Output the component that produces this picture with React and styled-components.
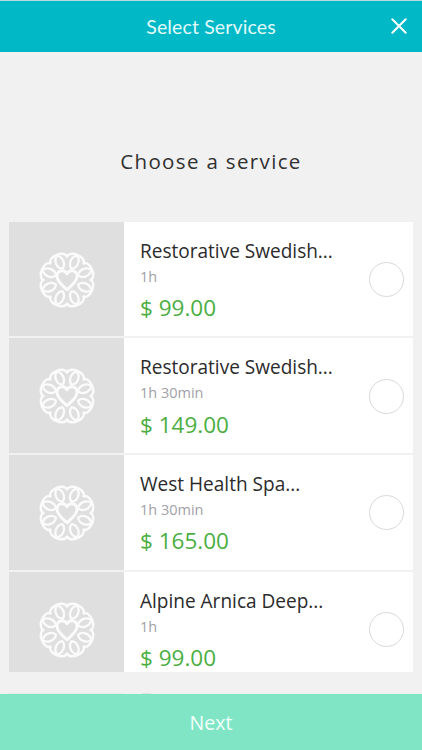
import React from 'react';
import styled, { createGlobalStyle } from 'styled-components';

const GlobalStyle = createGlobalStyle`
  * { box-sizing: border-box; }
  html, body { margin: 0; padding: 0; overflow: hidden; }
`;

const Screen = styled.div`
  width: 422px;
  height: 750px;
  display: flex;
  flex-direction: column;
  background: #f1f1f1;
  font-family: 'Open Sans', 'Noto Sans', sans-serif;
  overflow: hidden;
`;

const Header = styled.header`
  height: 52px;
  flex: none;
  display: grid;
  grid-template-columns: 44px 1fr 44px;
  align-items: center;
  background: #00b8c6;
  border-top: 1px solid #b5d9dd;
  color: #e2fafc;
`;

const Title = styled.h1`
  grid-column: 2;
  margin: 0;
  text-align: center;
  font: 400 19.5px/26px Lato, sans-serif;
  letter-spacing: 0.13px;
`;

const CloseButton = styled.button`
  border: 0;
  padding: 0 2px 2px 0;
  background: none;
  height: 44px;
  display: flex;
  align-items: center;
  justify-content: center;
`;

const Heading = styled.h2`
  margin: 0;
  height: 169.5px;
  flex: none;
  padding-top: 94px;
  text-align: center;
  font-size: 20.5px;
  line-height: 30px;
  font-weight: 400;
  letter-spacing: 1.35px;
  color: #303030;
`;

const ServiceList = styled.ul`
  list-style: none;
  margin: 0 9px;
  padding: 0;
  height: 450.5px;
  flex: none;
  display: flex;
  flex-direction: column;
  gap: 2px;
  overflow: hidden;
`;

const Row = styled.li`
  flex: none;
  height: 114.7px;
  display: flex;
  background: #fff;
`;

const Thumb = styled.div`
  width: 115px;
  flex: none;
  display: flex;
  align-items: center;
  justify-content: center;
  background: #dfdfdf;
  padding: 1.5px 0 0 1px;
`;

const Details = styled.div`
  flex: 1;
  min-width: 0;
  padding: 15px 0 0 16px;
  white-space: nowrap;
`;

const Name = styled.div`
  font-size: 19.05px;
  line-height: 28px;
  color: #2b2b2b;
`;

const Duration = styled.div`
  font-size: 14.5px;
  line-height: 22px;
  margin-top: 1.3px;
  color: #9fa1a6;
`;

const Price = styled.div`
  font-size: 22.5px;
  line-height: 26px;
  margin-top: 7.2px;
  color: #4bae41;
`;

const Radio = styled.span`
  width: 35px;
  height: 35px;
  flex: none;
  align-self: center;
  margin: 1px 9px 0 0;
  border: 1px solid #d9d9d9;
  border-radius: 50%;
`;

const Gap = styled.div`
  flex: 1;
  display: flex;
  align-items: flex-end;
  padding-left: 9px;
`;

const NextRowEdge = styled.div`
  width: 115px;
  height: 1px;
  background: #e6eae8;
`;

const NextRowText = styled.div`
  width: 9px;
  height: 1px;
  margin-left: 18px;
  background: #dce3e0;
`;

const NextButton = styled.button`
  height: 56px;
  flex: none;
  border: 0;
  padding: 1px 0 0;
  background: #80e5c4;
  color: #f3fffb;
  font: 400 19.6px/28px 'Open Sans', sans-serif;
`;

const FlowerIcon = styled.svg`
  filter: blur(0.45px);
`;

const LOBES = [0, 1, 2, 3, 4, 5, 6, 7].map((i) => i * 45 + 22.5);

function Flower() {
  return (
    <FlowerIcon width="62" height="62" viewBox="-31 -31 62 62" fill="none" stroke="#fbfbfb" strokeWidth="2.6" strokeLinejoin="round" strokeLinecap="round">
      {LOBES.map((angle) => (
        <g key={angle} transform={`rotate(${angle})`}>
          <path d="M-9.1 -22 C-8 -28.8 8 -28.8 9.1 -22" />
          <path d="M0 -12 C-5.2 -15 -5.2 -23 0 -26.4 C5.2 -23 5.2 -15 0 -12Z" strokeWidth="2.3" />
        </g>
      ))}
      <path d="M0 9.8 C-4 5.6 -10 2 -10 -3.8 C-10 -10 -2.5 -11 0 -6.2 C2.5 -11 10 -10 10 -3.8 C10 2 4 5.6 0 9.8Z" fill="#dfdfdf" strokeWidth="2.9" />
    </FlowerIcon>
  );
}

const services = [
  { name: 'Restorative Swedish...', duration: '1h', price: '$ 99.00' },
  { name: 'Restorative Swedish...', duration: '1h 30min', price: '$ 149.00' },
  { name: 'West Health Spa...', duration: '1h 30min', price: '$ 165.00' },
  { name: 'Alpine Arnica Deep...', duration: '1h', price: '$ 99.00' },
];

export default function App() {
  return (
    <Screen>
      <GlobalStyle />
      <Header>
        <Title>Select Services</Title>
        <CloseButton aria-label="Close">
          <svg width="18" height="18" viewBox="0 0 18 18" stroke="#fff" strokeWidth="2" strokeLinecap="round">
            <path d="M2.3 2.3 L15.7 15.7 M15.7 2.3 L2.3 15.7" />
          </svg>
        </CloseButton>
      </Header>
      <Heading>Choose a service</Heading>
      <ServiceList>
        {services.map((s, i) => (
          <Row key={i}>
            <Thumb><Flower /></Thumb>
            <Details>
              <Name>{s.name}</Name>
              <Duration>{s.duration}</Duration>
              <Price>{s.price}</Price>
            </Details>
            <Radio />
          </Row>
        ))}
      </ServiceList>
      <Gap>
        <NextRowEdge />
        <NextRowText />
      </Gap>
      <NextButton>Next</NextButton>
    </Screen>
  );
}
